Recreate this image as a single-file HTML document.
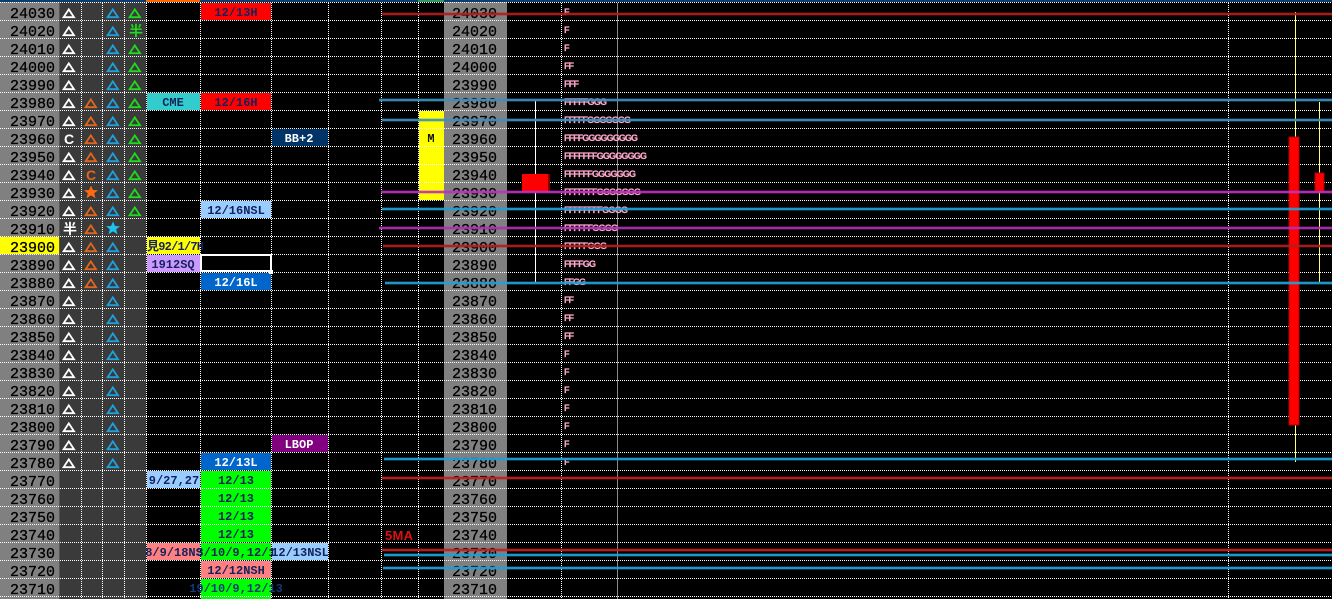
<!DOCTYPE html>
<html><head><meta charset="utf-8"><style>
html,body{margin:0;padding:0;background:#000;width:1332px;height:599px;overflow:hidden}
svg{display:block}
.n{font:15px "Liberation Mono",monospace;fill:#000;stroke:#000;stroke-width:.3}
.t{font:bold 12px "Liberation Mono",monospace;fill:#14225c;text-anchor:middle}
.w{fill:#fff}
.p{font:bold 9px "Liberation Sans",sans-serif;fill:#ffa8cc;stroke:#ffa8cc;stroke-width:.2}
.k{font:bold 14px "Noto Sans CJK JP",sans-serif;text-anchor:middle}
.c{font:bold 14px "Liberation Sans",sans-serif;text-anchor:middle}
</style></head><body>
<svg width="1332" height="599" viewBox="0 0 1332 599" xmlns="http://www.w3.org/2000/svg">
<defs>
<pattern id="h" width="2" height="18" patternUnits="userSpaceOnUse"><rect x="0" y="2" width="1" height="1" fill="#fff"/></pattern>
<path id="a" d="M0.6 5.2L5.8 -2.6L11 5.2Z" fill="none" stroke-width="1.8"/>
<path id="s" d="M0 -6.5L2 -2L7 -1.8L3.2 1.3L4.5 6.3L0 3.4L-4.5 6.3L-3.2 1.3L-7 -1.8L-2 -2Z"/>
<g id="L" fill="none">
<path d="M382 14H1332" stroke="#b02020"/>
<path d="M379 100H1332" stroke="#3d90bf"/>
<path d="M382 120H1332" stroke="#3d90bf"/>
<path d="M381 192H1332" stroke="#c030c0"/>
<path d="M382 209H1332" stroke="#20a0d8"/>
<path d="M379 228H1332" stroke="#b030b8"/>
<path d="M383 246H1332" stroke="#b02020"/>
<path d="M385 283H1332" stroke="#20a0d8"/>
<path d="M384 459H1332" stroke="#20a0d8"/>
<path d="M382 478H1332" stroke="#c02020"/>
<path d="M382 550H1332" stroke="#c02020"/>
<path d="M384 555H1332" stroke="#20a0d8"/>
<path d="M383 568H1332" stroke="#20a0d8"/>
</g>
</defs>
<rect width="1332" height="599" fill="#000"/>
<rect x="0" y="0" width="1332" height="2" fill="#0d3d6e"/>
<rect x="146" y="0" width="54" height="2" fill="#ff6600"/>
<rect x="418" y="0" width="26" height="2" fill="#2f9a5f"/>
<!-- columns -->
<rect x="0" y="2" width="59" height="597" fill="#808080"/>
<rect x="59" y="2" width="87" height="597" fill="#3a3a3a"/>
<rect x="444" y="2" width="63" height="597" fill="#808080"/>
<rect x="0" y="237" width="59" height="17" fill="#ffff00"/>
<!-- tags -->
<g shape-rendering="crispEdges">
<rect x="201" y="3" width="70" height="17" fill="#ff0000"/>
<rect x="147" y="93" width="53" height="17" fill="#33cccc"/>
<rect x="201" y="93" width="70" height="17" fill="#ff0000"/>
<rect x="272" y="129" width="56" height="17" fill="#003366"/>
<rect x="201" y="201" width="70" height="17" fill="#99ccff"/>
<rect x="147" y="237" width="53" height="17" fill="#ffff00"/>
<rect x="147" y="255" width="53" height="17" fill="#cc99ff"/>
<rect x="201" y="273" width="70" height="17" fill="#0066cc"/>
<rect x="272" y="435" width="56" height="17" fill="#800080"/>
<rect x="201" y="453" width="70" height="17" fill="#0066cc"/>
<rect x="147" y="471" width="53" height="17" fill="#99ccff"/>
<rect x="201" y="471" width="70" height="71" fill="#00ff00"/>
<rect x="147" y="543" width="53" height="17" fill="#ff8080"/>
<rect x="201" y="543" width="70" height="17" fill="#00ff00"/>
<rect x="272" y="543" width="56" height="17" fill="#99ccff"/>
<rect x="201" y="561" width="70" height="17" fill="#ff8080"/>
<rect x="201" y="579" width="70" height="20" fill="#00ff00"/>
<rect x="419" y="111" width="25" height="89" fill="#ffff00"/>
</g>
<!-- grid -->
<rect x="0" y="2" width="1332" height="597" fill="url(#h)"/>
<g stroke="#fff" stroke-dasharray="1 1" shape-rendering="crispEdges">
<line x1="81.5" y1="3" x2="81.5" y2="599"/><line x1="102.5" y1="3" x2="102.5" y2="599"/><line x1="124.5" y1="3" x2="124.5" y2="599"/><line x1="146.5" y1="3" x2="146.5" y2="599"/><line x1="200.5" y1="3" x2="200.5" y2="599"/><line x1="271.5" y1="3" x2="271.5" y2="599"/><line x1="328.5" y1="3" x2="328.5" y2="599"/><line x1="381.5" y1="3" x2="381.5" y2="599"/><line x1="418.5" y1="3" x2="418.5" y2="599"/><line x1="561.5" y1="3" x2="561.5" y2="599"/><line x1="1228.5" y1="3" x2="1228.5" y2="599"/>
</g>
<rect x="617" y="3" width="1" height="596" fill="#8a8a8a"/>
<rect x="59" y="2" width="1" height="597" fill="#555"/>
<!-- price labels left -->
<g class="n">
<text x="10" y="18">24030</text><text x="10" y="36">24020</text><text x="10" y="54">24010</text><text x="10" y="72">24000</text><text x="10" y="90">23990</text><text x="10" y="108">23980</text><text x="10" y="126">23970</text><text x="10" y="144">23960</text><text x="10" y="162">23950</text><text x="10" y="180">23940</text><text x="10" y="198">23930</text><text x="10" y="216">23920</text><text x="10" y="234">23910</text><text x="10" y="252">23900</text><text x="10" y="270">23890</text><text x="10" y="288">23880</text><text x="10" y="306">23870</text><text x="10" y="324">23860</text><text x="10" y="342">23850</text><text x="10" y="360">23840</text><text x="10" y="378">23830</text><text x="10" y="396">23820</text><text x="10" y="414">23810</text><text x="10" y="432">23800</text><text x="10" y="450">23790</text><text x="10" y="468">23780</text><text x="10" y="486">23770</text><text x="10" y="504">23760</text><text x="10" y="522">23750</text><text x="10" y="540">23740</text><text x="10" y="558">23730</text><text x="10" y="576">23720</text><text x="10" y="594">23710</text>
</g>
<!-- price labels right -->
<g class="n">
<text x="452" y="18">24030</text><text x="452" y="36">24020</text><text x="452" y="54">24010</text><text x="452" y="72">24000</text><text x="452" y="90">23990</text><text x="452" y="108">23980</text><text x="452" y="126">23970</text><text x="452" y="144">23960</text><text x="452" y="162">23950</text><text x="452" y="180">23940</text><text x="452" y="198">23930</text><text x="452" y="216">23920</text><text x="452" y="234">23910</text><text x="452" y="252">23900</text><text x="452" y="270">23890</text><text x="452" y="288">23880</text><text x="452" y="306">23870</text><text x="452" y="324">23860</text><text x="452" y="342">23850</text><text x="452" y="360">23840</text><text x="452" y="378">23830</text><text x="452" y="396">23820</text><text x="452" y="414">23810</text><text x="452" y="432">23800</text><text x="452" y="450">23790</text><text x="452" y="468">23780</text><text x="452" y="486">23770</text><text x="452" y="504">23760</text><text x="452" y="522">23750</text><text x="452" y="540">23740</text><text x="452" y="558">23730</text><text x="452" y="576">23720</text><text x="452" y="594">23710</text>
</g>
<!-- white triangles -->
<g stroke="#fff">
<use href="#a" x="63" y="12"/><use href="#a" x="63" y="30"/><use href="#a" x="63" y="48"/><use href="#a" x="63" y="66"/><use href="#a" x="63" y="84"/><use href="#a" x="63" y="102"/><use href="#a" x="63" y="120"/><use href="#a" x="63" y="156"/><use href="#a" x="63" y="174"/><use href="#a" x="63" y="192"/><use href="#a" x="63" y="210"/><use href="#a" x="63" y="246"/><use href="#a" x="63" y="264"/><use href="#a" x="63" y="282"/><use href="#a" x="63" y="300"/><use href="#a" x="63" y="318"/><use href="#a" x="63" y="336"/><use href="#a" x="63" y="354"/><use href="#a" x="63" y="372"/><use href="#a" x="63" y="390"/><use href="#a" x="63" y="408"/><use href="#a" x="63" y="426"/><use href="#a" x="63" y="444"/><use href="#a" x="63" y="462"/>
</g>
<text class="c" x="69" y="144" fill="#fff">C</text>
<text class="k" x="70" y="234" fill="#fff">半</text>
<!-- orange -->
<g stroke="#e0661f">
<use href="#a" x="85" y="102"/><use href="#a" x="85" y="120"/><use href="#a" x="85" y="138"/><use href="#a" x="85" y="156"/><use href="#a" x="85" y="210"/><use href="#a" x="85" y="228"/><use href="#a" x="85" y="246"/><use href="#a" x="85" y="264"/><use href="#a" x="85" y="282"/>
</g>
<text class="c" x="91" y="180" fill="#e0661f">C</text>
<use href="#s" x="91" y="192" fill="#ff6a10"/>
<!-- blue -->
<g stroke="#1fa0dc">
<use href="#a" x="107" y="12"/><use href="#a" x="107" y="30"/><use href="#a" x="107" y="48"/><use href="#a" x="107" y="66"/><use href="#a" x="107" y="84"/><use href="#a" x="107" y="102"/><use href="#a" x="107" y="120"/><use href="#a" x="107" y="138"/><use href="#a" x="107" y="156"/><use href="#a" x="107" y="174"/><use href="#a" x="107" y="192"/><use href="#a" x="107" y="210"/><use href="#a" x="107" y="246"/><use href="#a" x="107" y="264"/><use href="#a" x="107" y="282"/><use href="#a" x="107" y="300"/><use href="#a" x="107" y="318"/><use href="#a" x="107" y="336"/><use href="#a" x="107" y="354"/><use href="#a" x="107" y="372"/><use href="#a" x="107" y="390"/><use href="#a" x="107" y="408"/><use href="#a" x="107" y="426"/><use href="#a" x="107" y="444"/><use href="#a" x="107" y="462"/>
</g>
<use href="#s" x="113" y="228" fill="#1fc0f0"/>
<!-- green -->
<g stroke="#1fd81f">
<use href="#a" x="129" y="12"/><use href="#a" x="129" y="48"/><use href="#a" x="129" y="66"/><use href="#a" x="129" y="84"/><use href="#a" x="129" y="102"/><use href="#a" x="129" y="120"/><use href="#a" x="129" y="138"/><use href="#a" x="129" y="156"/><use href="#a" x="129" y="174"/><use href="#a" x="129" y="192"/><use href="#a" x="129" y="210"/>
</g>
<text class="k" x="136" y="36" fill="#1fd81f">半</text>
<!-- tag text -->
<g class="t">
<text x="236" y="16">12/13H</text>
<text x="173" y="106">CME</text>
<text x="236" y="106">12/16H</text>
<text x="299" y="142" class="t w">BB+2</text>
<text x="236" y="214">12/16NSL</text>
<text x="147" y="250" textLength="57" style="text-anchor:start;font-family:'Liberation Mono','Noto Sans CJK JP',monospace">見92/1/7H</text>
<text x="173" y="268">1912SQ</text>
<text x="236" y="286" class="t w">12/16L</text>
<text x="299" y="448" class="t w">LBOP</text>
<text x="236" y="466" class="t w">12/13L</text>
<text x="174" y="484">9/27,27</text>
<text x="236" y="484">12/13</text>
<text x="236" y="502">12/13</text>
<text x="236" y="520">12/13</text>
<text x="236" y="538">12/13</text>
<text x="174" y="556">8/9/18NS</text>
<text x="236" y="556">3/10/9,12/1</text>
<text x="300" y="556">12/13NSL</text>
<text x="236" y="574">12/12NSH</text>
<text x="236" y="592" style="fill:#123a78">19/10/9,12/13</text>
<text x="431" y="142" style="fill:#111">M</text>
</g>
<!-- selection -->
<rect x="201" y="255" width="70" height="16" fill="none" stroke="#fff" stroke-width="2"/>
<rect x="269" y="270" width="4" height="4" fill="#fff"/>
<text x="385" y="540" textLength="28" font-family="Liberation Sans, sans-serif" font-weight="bold" font-size="13" fill="#dd1111">5MA</text>
<!-- F/G profile -->
<g class="p">
<text x="564" y="15">F</text><text x="564" y="33">F</text><text x="564" y="51">F</text>
<text x="564" y="69" textLength="10">FF</text>
<text x="564" y="87" textLength="15">FFF</text>
<text x="564" y="105" textLength="43">FFFFFGGG</text>
<text x="564" y="123" textLength="67">FFFFFGGGGGGG</text>
<text x="564" y="141" textLength="74">FFFFGGGGGGGGG</text>
<text x="564" y="159" textLength="83">FFFFFFFGGGGGGGG</text>
<text x="564" y="177" textLength="72">FFFFFFGGGGGGG</text>
<text x="564" y="195" textLength="77">FFFFFFFGGGGGGG</text>
<text x="564" y="213" textLength="64">FFFFFFFFGGGG</text>
<text x="564" y="231" textLength="54">FFFFFFGGGG</text>
<text x="564" y="249" textLength="43">FFFFFGGG</text>
<text x="564" y="267" textLength="32">FFFFGG</text>
<text x="564" y="285" textLength="22">FFGG</text>
<text x="564" y="303" textLength="10">FF</text><text x="564" y="321" textLength="10">FF</text><text x="564" y="339" textLength="10">FF</text>
<text x="564" y="357">F</text><text x="564" y="375">F</text><text x="564" y="393">F</text><text x="564" y="411">F</text><text x="564" y="429">F</text><text x="564" y="447">F</text><text x="564" y="465">F</text>
</g>
<!-- candles -->
<rect x="535" y="101" width="1" height="181" fill="#fff"/>
<rect x="522" y="174" width="26" height="18" fill="#ff0000"/>
<rect x="548" y="174" width="2" height="18" fill="#800000"/>
<rect x="1295" y="12" width="1" height="450" fill="#ffff70"/>
<rect x="1319" y="102" width="1" height="180" fill="#ffff70"/>
<rect x="1289" y="137" width="10" height="288" fill="#ff0000" stroke="#b00000" stroke-width="1"/>
<rect x="1315" y="173" width="9" height="18" fill="#ff0000" stroke="#b00000" stroke-width="1"/>
<!-- overlay lines -->
<use href="#L" stroke-width="4" opacity=".3"/>
<use href="#L" stroke-width="2" opacity=".9"/>
</svg>
</body></html>
